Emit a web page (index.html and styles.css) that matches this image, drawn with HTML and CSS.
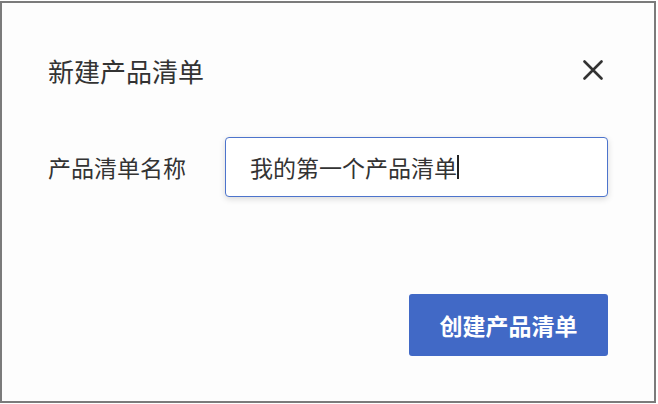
FILE: index.html
```html
<!DOCTYPE html>
<html lang="zh-CN">
<head>
    <meta charset="UTF-8">
    <meta name="viewport" content="width=device-width, initial-scale=1.0">
    <title>新建产品清单</title>
    <link rel="stylesheet" href="styles.css">
</head>
<body>
    <div class="dialog">
        <div class="dialog-header">
            <h1 class="dialog-title">新建产品清单</h1>
            <button class="close-btn" aria-label="关闭">
                <svg width="20" height="20" viewBox="0 0 20 20">
                    <path d="M1.5 1.5 L18.5 18.5 M18.5 1.5 L1.5 18.5" stroke="#333" stroke-width="2.6" stroke-linecap="round" fill="none"/>
                </svg>
            </button>
        </div>

        <div class="form-row">
            <label class="field-label" for="list_name">产品清单名称</label>
            <div class="field-input" id="list_name" role="textbox">我的第一个产品清单<span class="caret"></span></div>
        </div>

        <div class="dialog-footer">
            <button class="primary-btn">创建产品清单</button>
        </div>
    </div>
</body>
</html>
```

FILE: styles.css
```css
body {
    margin: 0;
    padding: 0;
    background-color: #fff;
    font-family: "Noto Sans CJK SC", "Noto Sans", sans-serif;
    color: #333;
}

.dialog {
    box-sizing: border-box;
    width: 656px;
    height: 402px;
    margin-top: 1px;
    border: 2px solid #7b7b7b;
    background: #fdfdfd;
    padding: 47px 46px 0 46px;
}

.dialog-header {
    display: flex;
    justify-content: space-between;
    align-items: center;
    height: 40px;
}

.dialog-title {
    margin: 0;
    font-size: 26px;
    font-weight: normal;
    color: #333;
}

.close-btn {
    width: 20px;
    height: 20px;
    padding: 0;
    margin-right: 5px;
    border: none;
    background: none;
    cursor: pointer;
    display: flex;
}

.form-row {
    display: flex;
    align-items: center;
    margin-top: 47px;
    height: 60px;
}

.field-label {
    width: 177px;
    font-size: 23px;
    color: #333;
}

.field-input {
    box-sizing: border-box;
    flex: 1;
    height: 60px;
    display: flex;
    align-items: center;
    padding: 0 24px;
    border: 1.5px solid #4d74cc;
    border-radius: 4px;
    background: #fff;
    box-shadow: 0 2px 6px rgba(0, 0, 0, 0.15);
    font-size: 23px;
    color: #333;
}

.caret {
    display: inline-block;
    width: 2px;
    height: 24px;
    background: #222;
}

.dialog-footer {
    display: flex;
    justify-content: flex-end;
    margin-top: 97px;
}

.primary-btn {
    width: 199px;
    height: 62px;
    border: none;
    border-radius: 3px;
    background-color: #4169c6;
    color: #fff;
    font-family: "Noto Sans CJK SC", "Noto Sans", sans-serif;
    font-size: 23px;
    font-weight: bold;
    cursor: pointer;
}
```
